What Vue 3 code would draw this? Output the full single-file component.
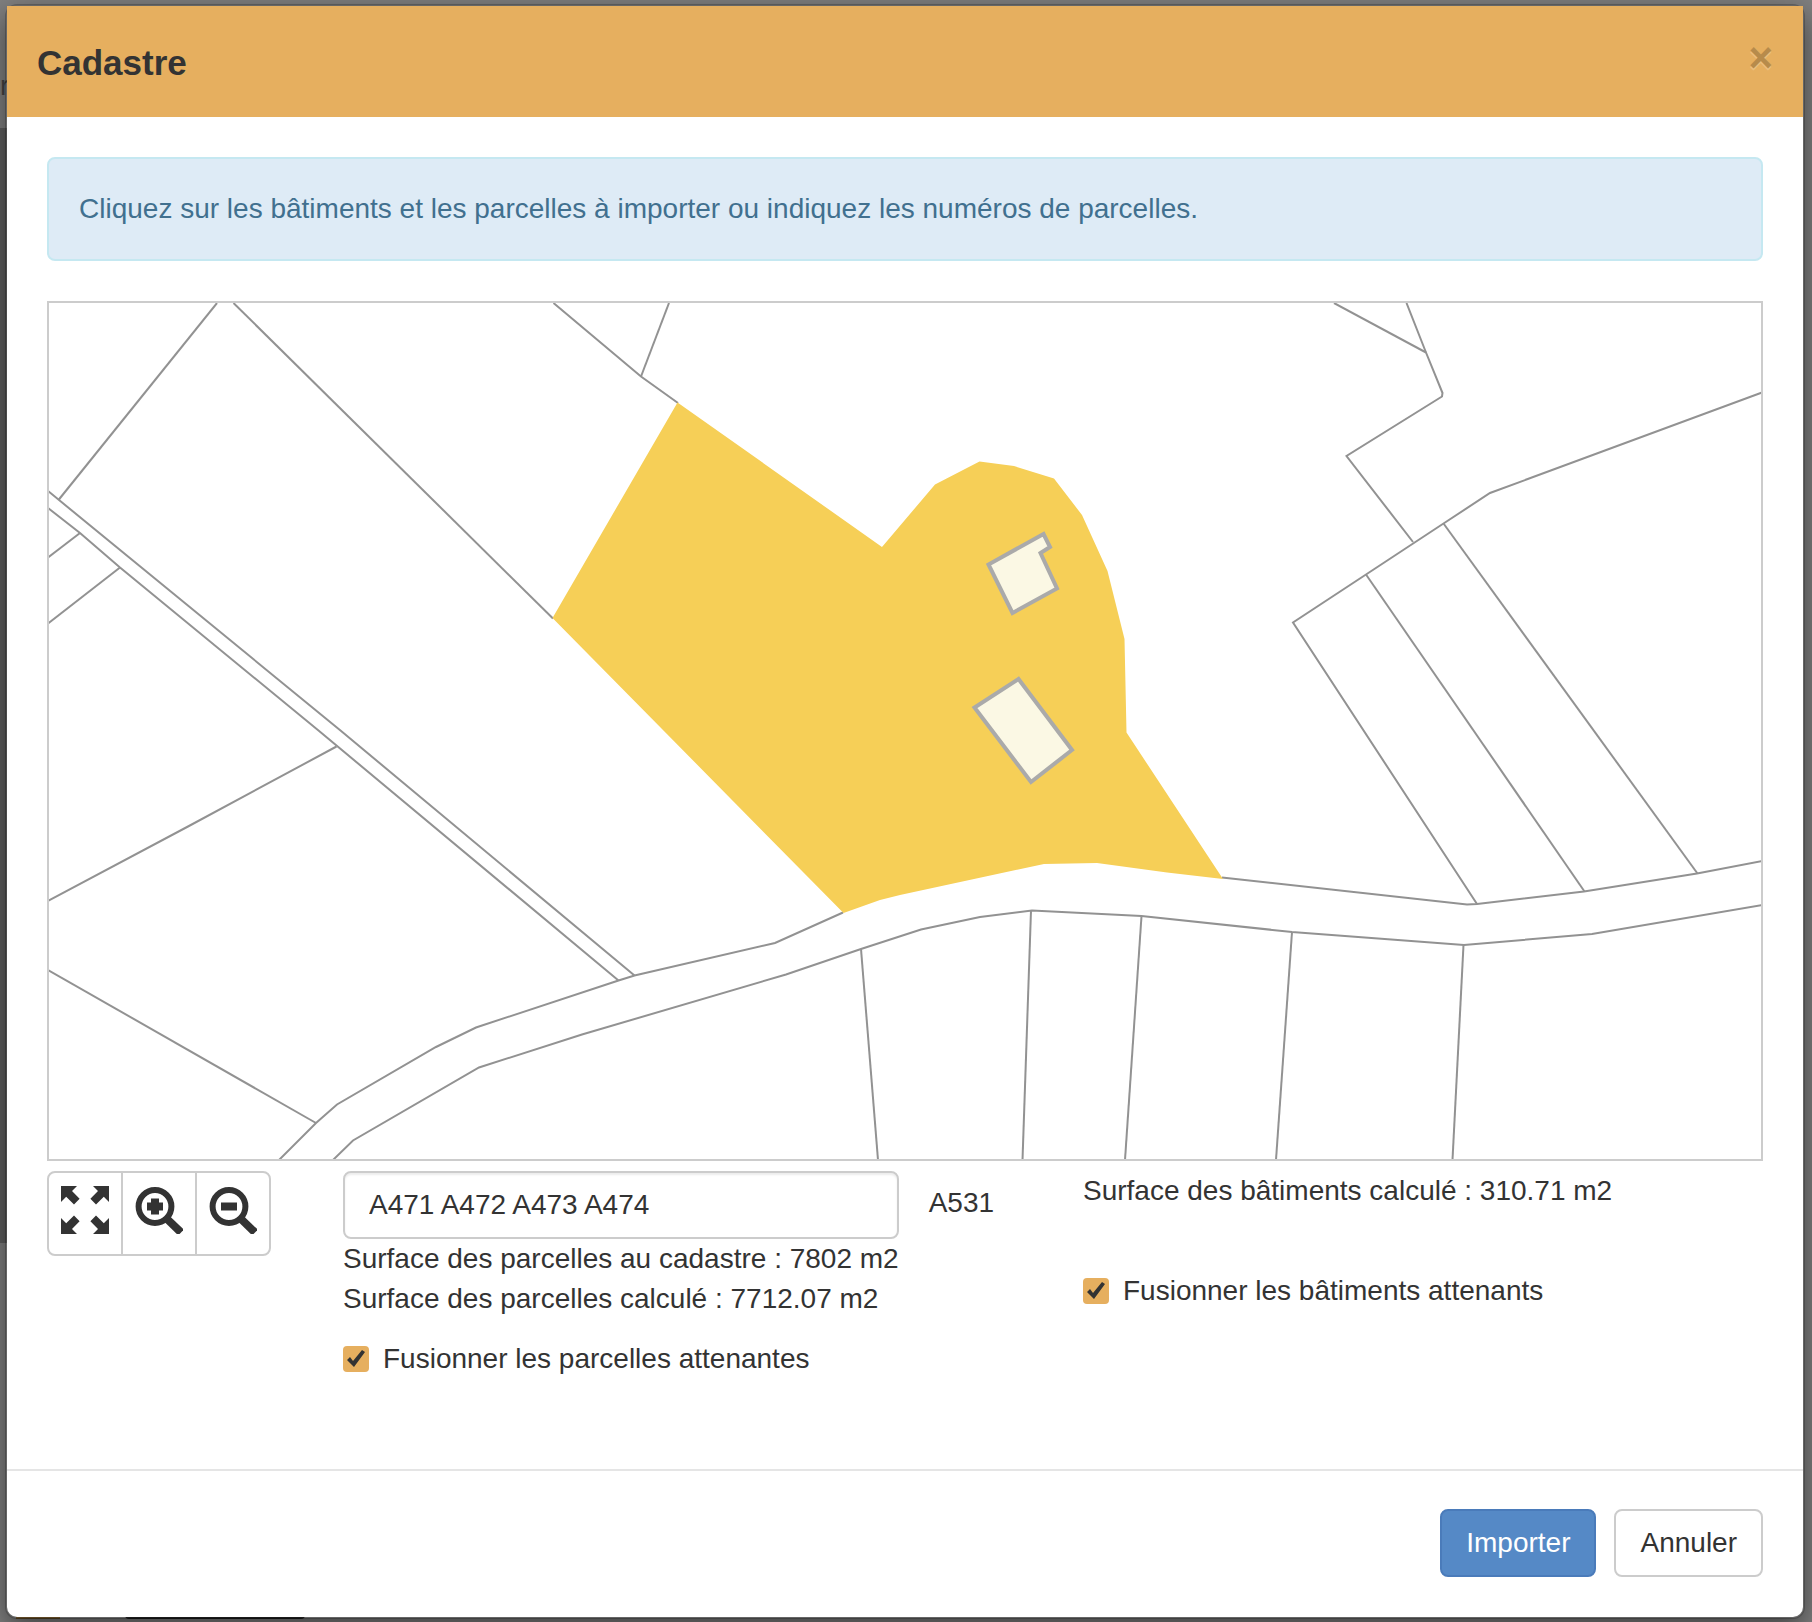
<script setup>
import { ref } from 'vue'

const parcels = ref('A471 A472 A473 A474')
const mergeParcels = ref(true)
const mergeBuildings = ref(true)

const boundaries = [
  'M217 303L58.5 500',
  'M233.5 303L553 618.5',
  'M553.5 303L641 376.5L678 403',
  'M669 303L641 376.5',
  'M48 491L340.5 730.5L634.5 975.5',
  'M48 508L80 533L120 567.5L318.5 730.5L618.5 980.5',
  'M80 533L48 557.5',
  'M120 567.5L48 623.5',
  'M336.5 746.5L188 826.5L48 901',
  'M48 970L316 1123',
  'M279 1160L316 1123L337 1104.5L436 1047L476 1027.5L618.5 980.5L634.5 975.5L775 943L843 912.5',
  'M333 1160L353 1140.5L479 1067.5L582 1034.5L786 974.5L861 949L921 929.5L980 917L1032 910.5L1141.5 916L1292 932L1464 945L1592 934L1762 905',
  'M1222 877.5L1467 904.5L1477 904L1584 891.5L1697 873.5L1762 861',
  'M861 949L878 1160',
  'M1031 910.5L1022.5 1160',
  'M1141.5 916L1125 1160',
  'M1292 932L1276 1160',
  'M1463.5 945L1452.5 1160',
  'M1334 303L1426 352.5',
  'M1406.5 303L1426 352.5L1442.5 393L1442 396.5L1346.5 456L1413 542',
  'M1762 392.5L1490 493L1443.5 523.5L1366 574.5L1293 622.5L1477 904',
  'M1366 574.5L1584.5 891.5',
  'M1443.5 523.5L1697.5 873.5',
]
</script>

<template>
  <div class="screen">
    <div class="page" aria-hidden="true">
      <div class="page-bar">r</div>
      <div class="page-panel"></div>
      <div class="page-actions">
        <span class="pill"></span>
        <span class="dark-field"></span>
      </div>
    </div>

    <section class="modal" role="dialog" aria-labelledby="modal-title">
      <header class="modal-header">
        <h1 id="modal-title">Cadastre</h1>
        <button type="button" class="close" aria-label="Fermer">×</button>
      </header>

      <div class="modal-body">
        <p class="alert">Cliquez sur les bâtiments et les parcelles à importer ou indiquez les numéros de parcelles.</p>

        <svg class="map" viewBox="49 303 1712 856" role="img" aria-label="Plan cadastral">
          <path v-for="d in boundaries" :key="d" class="boundary" :d="d" />
          <path
            class="parcel"
            d="M677.5 402.5L882 547L935 484.5L979.5 461.5L1014 466L1054 478.5L1082 515L1107.5 571L1124.5 639L1126.5 732.5L1223 879L1167 872.5L1097 863L1044 864L900 895L880 900L843.5 913L552.5 618Z"
          />
          <path class="building" d="M1043.5 534L1050 547L1040.5 553L1057 588.5L1012.5 613L988.5 564.5Z" />
          <path class="building" d="M1018.5 679L1072 750L1031 782L974.5 707.5Z" />
        </svg>

        <div class="row">
          <div class="col">
            <div class="tools">
              <button type="button" aria-label="Plein écran">
                <svg viewBox="0 0 48 48">
                  <path
                    d="M0 0H16L11 5L18.6 12.8L13 18.4L5.2 10.8L0 16ZM48 0V16L42.8 10.8L35 18.4L29.4 12.8L37 5L32 0ZM0 48V32L5.2 37.2L13 29.6L18.6 35.2L11 43L16 48ZM48 48H32L37 43L29.4 35.2L35 29.6L42.8 37.2L48 32Z"
                  />
                </svg>
              </button>
              <button type="button" aria-label="Zoom avant">
                <svg viewBox="0 0 48 48">
                  <circle class="lens" cx="20" cy="20.5" r="16.4" />
                  <path class="handle" d="M30 31L46 46.5" />
                  <path d="M16 12.5H24V16.500H28V24.5H24V28.5H16V24.5H12V16.500H16Z" />
                </svg>
              </button>
              <button type="button" aria-label="Zoom arrière">
                <svg viewBox="0 0 48 48">
                  <circle class="lens" cx="20" cy="20.5" r="16.4" />
                  <path class="handle" d="M30 31L46 46.5" />
                  <path d="M12 16.500H28V24.5H12Z" />
                </svg>
              </button>
            </div>
          </div>

          <div class="col parcels">
            <div>
              <input v-model="parcels" class="field" type="text" size="1" aria-label="Numéros de parcelles" />
              <p>Surface des parcelles au cadastre : 7802 m2</p>
              <p>Surface des parcelles calculé : 7712.07 m2</p>
              <label class="check check-parcels">
                <input v-model="mergeParcels" type="checkbox" />
                Fusionner les parcelles attenantes
              </label>
            </div>
            <span class="hovered">A531</span>
          </div>

          <div class="col">
            <p>Surface des bâtiments calculé : 310.71 m2</p>
            <label class="check check-buildings">
              <input v-model="mergeBuildings" type="checkbox" />
              Fusionner les bâtiments attenants
            </label>
          </div>
        </div>
      </div>

      <footer class="modal-footer">
        <button type="button" class="btn primary">Importer</button>
        <button type="button" class="btn">Annuler</button>
      </footer>
    </section>
  </div>
</template>

<style>
body {
  margin: 0;
  background: #808080;
}
</style>

<style scoped>
* {
  box-sizing: border-box;
}

.screen {
  display: grid;
  grid-template-columns: minmax(0, 1fr);
  overflow: hidden;
  color: #333;
  font: 28px/40px "Liberation Sans", Arial, sans-serif;
}

.page,
.modal {
  grid-area: 1 / 1;
}

/* Page seen through the modal's backdrop */
.page {
  display: flex;
  flex-direction: column;
  background: #808080;
}

.page-bar {
  height: 128px;
  padding-top: 66px;
  color: #444;
}

.page-panel {
  width: 50%;
  height: 1115px;
  background: #606060;
}

.page-actions {
  display: flex;
  gap: 65px;
  margin-top: auto;
  padding-left: 16px;
}

.pill {
  width: 44px;
  height: 20px;
  background: #73582f;
}

.dark-field {
  width: 180px;
  height: 20px;
  margin-bottom: 3px;
  border-radius: 4px;
  background: #222;
}

.modal {
  position: relative;
  margin: 4px 7px 3px 5px;
  border: 2px solid rgba(0, 0, 0, 0.2);
  border-radius: 12px;
  background: #fff;
  background-clip: padding-box;
  box-shadow: 0 10px 30px rgba(0, 0, 0, 0.5);
}

.modal-header {
  display: flex;
  justify-content: space-between;
  align-items: flex-start;
  height: 111px;
  padding: 30px;
  background: #e6af5f;
}

h1,
p {
  margin: 0;
  font-weight: 400;
}

h1 {
  font-size: 35px;
  line-height: 54px;
  font-weight: 700;
}

button {
  font: inherit;
  color: inherit;
  cursor: pointer;
}

.close {
  padding: 0;
  border: 0;
  background: none;
  color: #000;
  font-size: 42px;
  line-height: 44px;
  font-weight: 700;
  text-shadow: 0 2px 0 #fff;
  opacity: 0.2;
}

.modal-body {
  padding: 40px 40px 90px;
}

.alert {
  margin-bottom: 40px;
  padding: 30px;
  border: 2px solid #c5e8f1;
  border-radius: 8px;
  background: #deebf6;
  color: #41708f;
}

.map {
  display: block;
  width: 100%;
  border: 2px solid #ccc;
}

.boundary {
  fill: none;
  stroke: #929292;
  stroke-width: 2;
}

.parcel {
  fill: #f6cf57;
}

.building {
  fill: #fbf8e4;
  stroke: #aaa;
  stroke-width: 4;
}

.row {
  display: grid;
  grid-template-columns: 2fr 5fr 5fr;
  margin: 10px -30px 0;
}

.col {
  min-width: 0;
  padding: 0 30px;
  white-space: nowrap;
}

.tools {
  display: inline-flex;
  border: 2px solid #ccc;
  border-radius: 8px;
}

.tools button {
  width: 74px;
  height: 81px;
  padding: 13px 12px 0;
  border: 0;
  border-left: 2px solid #ccc;
  background: none;
}

.tools button:first-child {
  width: 72px;
  border-left: 0;
}

.tools svg {
  display: block;
  width: 48px;
  height: 48px;
  margin-bottom: 20px;
  fill: #333;
}

.tools .lens {
  fill: none;
  stroke: #333;
  stroke-width: 6;
}

.tools .handle {
  stroke: #333;
  stroke-width: 8;
}

.parcels {
  display: flex;
  align-items: flex-start;
  gap: 30px;
}

.field {
  display: block;
  width: 100%;
  height: 68px;
  padding: 12px 24px;
  border: 2px solid #ccc;
  border-radius: 8px;
  background: #fff;
  box-shadow: inset 0 2px 2px rgba(0, 0, 0, 0.075);
  color: inherit;
  font: inherit;
}

.hovered {
  padding-top: 12px;
}

.check {
  display: flex;
  align-items: center;
  gap: 14px;
}

.check-parcels {
  margin-top: 20px;
}

.check-buildings {
  margin-top: 60px;
}

.check input {
  appearance: none;
  width: 26px;
  height: 26px;
  margin: 0;
  border-radius: 4px;
  background: #e6af5f;
}

.check input:checked::before {
  content: "";
  display: block;
  height: 26px;
  background: #333;
  clip-path: polygon(4px 14px, 7px 11px, 10px 15px, 19px 4px, 22px 6px, 11px 21px);
}

.modal-footer {
  display: flex;
  justify-content: flex-end;
  gap: 18px;
  padding: 38px 40px 40px;
  border-top: 2px solid #e5e5e5;
}

.btn {
  padding: 12px 24px;
  border: 2px solid #ccc;
  border-radius: 8px;
  background: #fff;
}

.btn.primary {
  border-color: #4a7bba;
  background: #5589c6;
  color: #fff;
}
</style>
